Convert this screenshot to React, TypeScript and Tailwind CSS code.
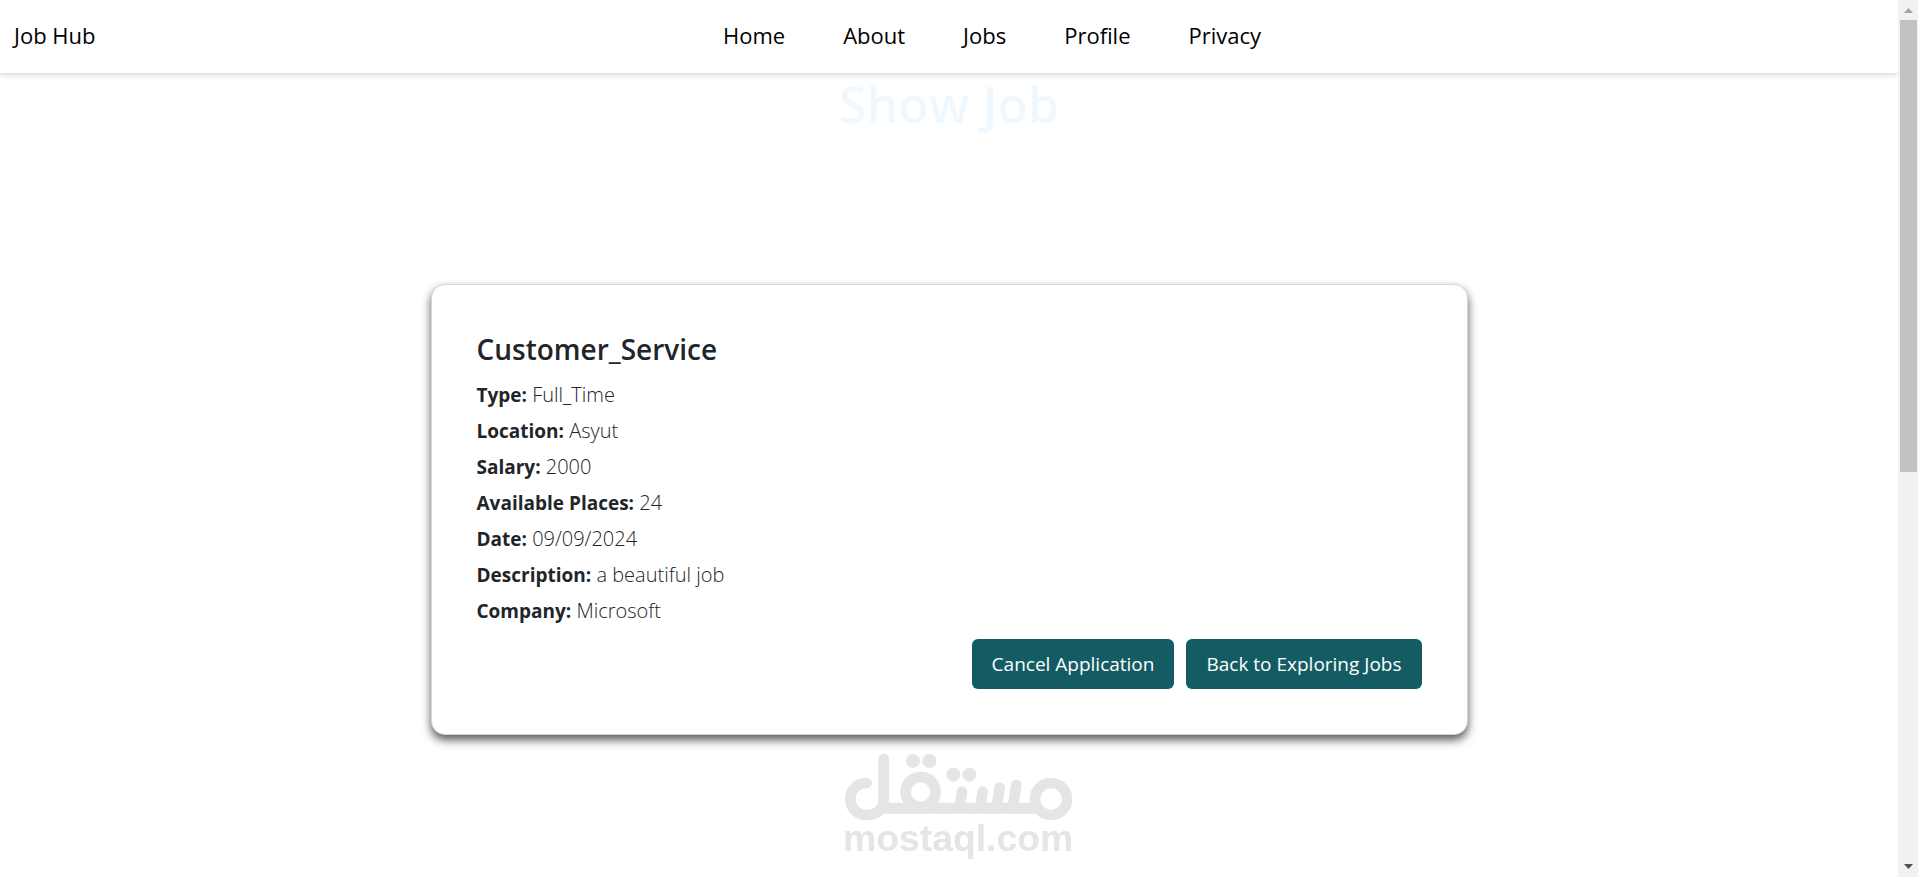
interface JobDetail {
  label: string
  value: string
}

const navLinks = ['Home', 'About', 'Jobs', 'Profile', 'Privacy']

const details: JobDetail[] = [
  { label: 'Type', value: 'Full_Time' },
  { label: 'Location', value: 'Asyut' },
  { label: 'Salary', value: '2000' },
  { label: 'Available Places', value: '24' },
  { label: 'Date', value: '09/09/2024' },
  { label: 'Description', value: 'a beautiful job' },
  { label: 'Company', value: 'Microsoft' },
]

function Navbar() {
  return (
    <header className="grid h-[73px] grid-cols-[1fr_auto_1fr] items-center bg-white px-3.5 pb-0.5 text-[22px] font-medium text-black shadow-[0_2px_5px_rgba(0,0,0,0.16)]">
      <a href="#" className="justify-self-start">
        Job Hub
      </a>
      <nav className="flex gap-[58px] pl-[86px]">
        {navLinks.map((link) => (
          <a key={link} href={`#${link.toLowerCase()}`}>
            {link}
          </a>
        ))}
      </nav>
    </header>
  )
}

function JobCard() {
  return (
    <section className="w-full max-w-[1037px] rounded-[14px] border border-[#d6d6d6] bg-white px-[45px] pt-[46px] pb-[45px] text-[#212529] shadow-[0_5px_10px_rgba(0,0,0,0.65)]">
      <h2 className="text-[28px] leading-9 font-semibold">Customer_Service</h2>
      <div className="pt-2.5 text-[20px] leading-9">
        {details.map((detail) => (
          <p key={detail.label} className="font-light">
            <strong className="text-[19px] font-bold">{detail.label}:</strong> {detail.value}
          </p>
        ))}
      </div>
      <div className="flex justify-end gap-3 pt-2.5">
        <JobButton text="Cancel Application" />
        <JobButton text="Back to Exploring Jobs" />
      </div>
    </section>
  )
}

function JobButton({ text }: { text: string }) {
  return (
    <button type="button" className="h-[50px] rounded-md bg-[#145c64] px-5 text-[19px] text-white">
      {text}
    </button>
  )
}

function Watermark() {
  return (
    <svg
      viewBox="36 40 702 324"
      className="pointer-events-none fixed bottom-4 left-1/2 w-[234px] -translate-x-1/2"
      role="img"
      aria-label="mostaql.com"
    >
      <g fill="none" stroke="#e5e5e5" strokeWidth="32" strokeLinecap="round">
        <path d="M110 130C82 130 61 151 61 178C61 206 82 226 110 226C140 226 161 207 161 176V58" />
        <path d="M158 206H625" strokeWidth="33" strokeLinecap="butt" />
        <circle cx="272" cy="157" r="45" />
        <circle cx="663" cy="178" r="48" />
        <path d="M396 156L390 200M458 156L451 200M509 144L500 200M559 136L549 200" />
      </g>
      <g fill="#e5e5e5">
        <circle cx="249" cy="64" r="21" />
        <circle cx="298" cy="64" r="21" />
        <circle cx="370" cy="105" r="21" />
        <circle cx="418" cy="105" r="21" />
        <text x="39" y="333" fontSize="112" className="font-['Liberation_Sans',sans-serif] font-bold">
          mostaql.com
        </text>
      </g>
    </svg>
  )
}

function ScrollBar() {
  return (
    <div className="sticky top-0 flex h-screen w-5 shrink-0 flex-col items-center bg-[#f1f1f1]" aria-hidden="true">
      <svg viewBox="0 0 20 20" className="h-5 w-5 shrink-0" fill="#a3a3a3">
        <path d="M6 13L10.500 8L15 13Z" />
      </svg>
      <div className="min-h-0 flex-1 self-stretch pr-px pl-0.5">
        <div className="h-[54%] bg-[#c1c1c1]" />
      </div>
      <svg viewBox="0 0 20 20" className="h-5 w-5 shrink-0" fill="#505050">
        <path d="M6 7H15L10.500 12Z" />
      </svg>
    </div>
  )
}

export default function App() {
  return (
    <div className="flex min-h-screen bg-white font-['Open_Sans','Noto_Sans',sans-serif]">
      <div className="min-w-0 flex-1">
        <Navbar />
        <main className="flex flex-col items-center">
          <h1 className="text-[50px] leading-[62px] font-semibold text-[#f0f8ff]">Show Job</h1>
          <div className="flex w-full justify-center pt-[149px] pb-36">
            <JobCard />
          </div>
        </main>
      </div>
      <ScrollBar />
      <Watermark />
    </div>
  )
}
